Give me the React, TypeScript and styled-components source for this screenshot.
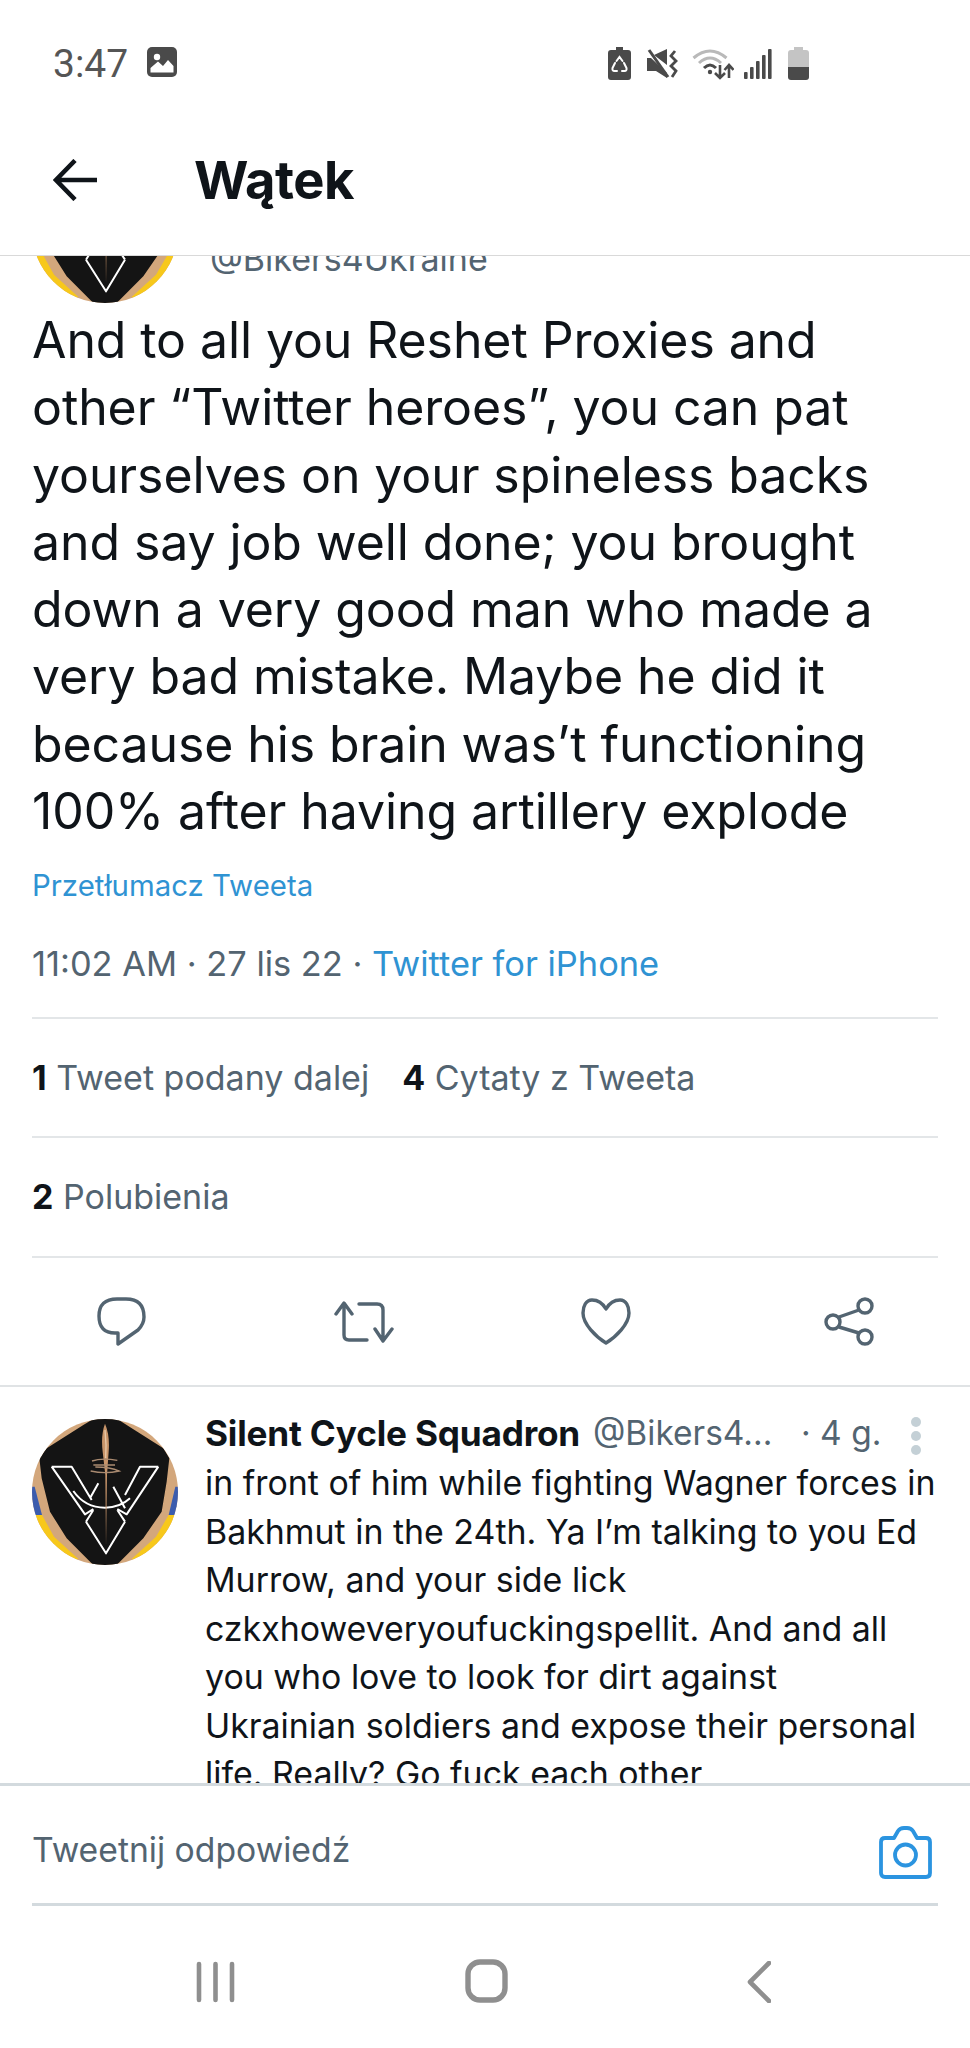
import React from "react";
import styled, { createGlobalStyle } from "styled-components";

const Global = createGlobalStyle`
  html, body { margin: 0; padding: 0; background: #fff; }
  * { box-sizing: border-box; }
`;

const Page = styled.div`
  width: 970px; height: 2048px; display: flex; flex-direction: column; overflow: hidden;
  background: #fff; font-family: Inter, "Noto Sans", sans-serif; color: #0f1419;
`;
const StatusBar = styled.div`
  height: 126px; flex: none; padding: 47px 0 0 53px; display: flex; align-items: flex-start;
  font-family: Roboto, sans-serif; color: #555;
`;
const Clock = styled.span`
  font-size: 39px; line-height: 34px; width: 94px; flex: none;
`;
const StatusIcons = styled.div`
  margin-left: 431px; display: flex; align-items: flex-start; gap: 0;
`;
const Header = styled.header`
  height: 130px; flex: none; display: flex; align-items: flex-start; border-bottom: 1px solid #d9d9d9;
  padding: 33px 0 0 53px; background: #fff;
`;
const Title = styled.h1`
  margin: -3px 0 0 97px; font-size: 52.5px; line-height: 48px; font-weight: 700; letter-spacing: -0.5px;
`;
const Scroll = styled.main`
  flex: 1; min-height: 0; overflow: hidden;
`;
const Author = styled.div`
  margin-top: -99px; padding-left: 32px; display: flex; gap: 32px; height: 146px;
`;
const AuthorNames = styled.div`
  display: flex; flex-direction: column; padding-top: 38px;
`;
const AuthorName = styled.span`
  font-size: 34px; line-height: 44px; font-weight: 700;
`;
const AuthorHandle = styled.span`
  font-size: 34px; line-height: 40px; color: #536471;
`;
const Body = styled.div`
  margin: 4px 0 0 32px; font-size: 50px; line-height: 67.3px; letter-spacing: -0.1px;
`;
const Line = styled.div`
  white-space: nowrap;
`;
const Translate = styled.div`
  margin: 21px 0 0 32px; font-size: 29.4px; line-height: 40px; color: #2f93d3;
`;
const Meta = styled.div`
  margin: 38px 0 0 32px; font-size: 34.4px; line-height: 40px; color: #536471; white-space: nowrap;
`;
const MetaLink = styled.span`
  color: #2f93d3;
`;
const Section = styled.div`
  margin: 33px 32px 0; border-top: 2px solid #e3e6e8; padding-top: 39px; height: 119px;
  display: flex; gap: 33px; font-size: 34px; line-height: 40px; color: #536471; white-space: nowrap;
`;
const Stat = styled.b`
  color: #0f1419; font-weight: 700;
`;
const Section2 = styled(Section)`
  margin-top: 0; height: 120px;
`;
const Actions = styled.div`
  margin: 0 32px; border-top: 2px solid #e3e6e8; height: 0;
`;
const ActionRow = styled.div`
  display: grid; grid-template-columns: repeat(4, 242.5px); height: 129px; border-bottom: 2px solid #e0e3e5;
  justify-items: center; align-items: center;
`;
const Reply = styled.article`
  display: flex; padding: 32px 0 0 32px; gap: 27px; position: relative;
`;
const ReplyBody = styled.div`
  flex: 1; min-width: 0; margin-top: -8px;
`;
const ReplyHead = styled.div`
  display: flex; height: 44px; align-items: center; font-size: 33.5px; white-space: nowrap;
`;
const ReplyName = styled.b`
  font-weight: 700; font-size: 35.2px; letter-spacing: -0.2px;
`;
const ReplyHandle = styled.span`
  color: #536471; margin-left: 13px; width: 208px; flex: none;
`;
const ReplyTime = styled.span`
  color: #536471;
`;
const Dots = styled.div`
  position: absolute; left: 911px; top: 30px; display: flex; flex-direction: column; gap: 4px;
`;
const Dot = styled.i`
  display: block; width: 10px; height: 10px; border-radius: 50%; background: #c4d0d6;
`;
const ReplyText = styled.div`
  font-size: 33.9px; line-height: 48.5px; margin-top: 4px;
`;
const Composer = styled.footer`
  flex: none; height: 120px; border-top: 3px solid #d3dade; margin: 0; display: flex; align-items: flex-start;
  justify-content: space-between; padding: 40px 38px 0 32px; background: #fff;
`;
const Placeholder = styled.span`
  font-size: 33.7px; line-height: 48px; color: #536471;
`;
const Rule = styled.div`
  flex: none; height: 3px; margin: 0 32px; background: #d3dade;
`;
const NavBar = styled.nav`
  flex: none; height: 142px; display: grid; grid-template-columns: 196px 269px 239px 1fr; align-items: flex-start; padding-top: 55px;
`;
const Spacer = styled.span``;

const Avatar = ({ size = 146 }: { size?: number }) => (
  <svg width={size} height={size} viewBox="6 12 438 438" style={{ flex: "none" }}>
    <defs>
      <clipPath id="avc"><circle cx="225" cy="231" r="219" /></clipPath>
    </defs>
    <g clipPath="url(#avc)">
      <rect x="6" y="12" width="438" height="438" fill="#d3a77c" />
      <polygon points="6,215 14,215 36,300 6,300" fill="#3b5cae" />
      <polygon points="6,300 36,300 72,365 145,432 100,450 6,450" fill="#f7c81b" />
      <polygon points="444,215 436,215 416,300 444,300" fill="#3b5cae" />
      <polygon points="444,300 416,300 378,365 305,432 350,450 444,450" fill="#f7c81b" />
      <polygon points="190,12 262,12 290,30 400,100 418,130 410,200 395,290 340,370 260,450 190,450 110,370 60,290 35,190 28,130 50,100 160,30" fill="#141414" />
      <path d="M65 155H125L185 255M65 155L165 298L190 282M385 155H330L285 240M385 155L290 298L262 282M168 320L228 415L285 320M168 320L190 285M285 320L262 285M130 228Q165 278 225 278Q270 278 300 250M205 205L180 250M250 215L285 280" fill="none" stroke="#fff" strokeWidth="6" strokeLinejoin="round" />
      <path d="M225 26Q240 60 236 110L231 180L228 395L226 180L218 110Q212 60 225 26Z" fill="#c8956a" />
      <path d="M225 45Q230 90 227 130" fill="none" stroke="#e9c9a8" strokeWidth="4" />
      <path d="M186 138Q215 128 262 136M182 168Q225 178 268 168Q240 156 196 156M190 150L255 150" fill="none" stroke="#a98a70" strokeWidth="4" />
    </g>
  </svg>
);

const ImageIcon = () => (
  <svg width="30" height="30" viewBox="0 0 30 30">
    <rect width="30" height="30" rx="5" fill="#4a4a4a" />
    <rect x="4" y="4" width="22" height="22" rx="1" fill="#4a4a4a" />
    <circle cx="10" cy="10" r="3.2" fill="#fff" />
    <path d="M3.5 25.5V21L11 14.5L16 19L21 13L26.5 19V25.5Z" fill="#fff" />
  </svg>
);
const RecycleBattery = () => (
  <svg width="23" height="33" viewBox="0 0 23 33" style={{ marginLeft: 0 }}>
    <path d="M8 0H15V3H20Q23 3 23 6V30Q23 33 20 33H3Q0 33 0 30V6Q0 3 3 3H8Z" fill="#4a4a4a" />
    <path d="M8.500 14L11.500 10L14.500 14M16 16L18.500 21Q19 24 16.500 24H14M9 24H6.500Q4 24 4.500 21L7 16" fill="none" stroke="#fff" strokeWidth="2" strokeLinecap="round" />
  </svg>
);
const MuteIcon = () => (
  <svg width="31" height="30" viewBox="0 0 31 30" style={{ marginLeft: 16, marginTop: 2 }}>
    <path d="M0 9H4L20 24V29L9 22H0Z M7 6L20 0V16Z" fill="#4a4a4a" />
    <path d="M2 1L21 28" stroke="#4a4a4a" strokeWidth="3" />
    <path d="M28 2L24 7L29 12L24 17L29 22L25 28" fill="none" stroke="#4a4a4a" strokeWidth="2.800" />
  </svg>
);
const WifiIcon = () => (
  <svg width="42" height="32" viewBox="0 0 42 32" style={{ marginLeft: 14, marginTop: 1 }}>
    <path d="M1.500 10Q18 -4 34.500 10" fill="none" stroke="#b9b9b9" strokeWidth="3" />
    <path d="M7 15Q18 5 29 15" fill="none" stroke="#b9b9b9" strokeWidth="3" />
    <path d="M12 20Q18 14 24 20" fill="none" stroke="#4a4a4a" strokeWidth="3" />
    <circle cx="18" cy="24" r="2.200" fill="#4a4a4a" />
    <path d="M28 17V30M23 25L28 30L33 25M37 30V17M32.500 22L37 17L41.500 22" fill="none" stroke="#4a4a4a" strokeWidth="2.600" />
  </svg>
);
const SignalIcon = () => (
  <svg width="28" height="31" viewBox="0 0 28 31" style={{ marginLeft: 10, marginTop: 2 }}>
    <rect x="0" y="23" width="3.600" height="7" rx="1" fill="#4a4a4a" />
    <rect x="6" y="18" width="3.600" height="12" rx="1" fill="#4a4a4a" />
    <rect x="12" y="12" width="3.600" height="18" rx="1" fill="#4a4a4a" />
    <rect x="18" y="6" width="3.600" height="24" rx="1" fill="#4a4a4a" />
    <rect x="24" y="0" width="3.600" height="30" rx="1" fill="#4a4a4a" />
  </svg>
);
const BatteryIcon = () => (
  <svg width="21" height="33" viewBox="0 0 21 33" style={{ marginLeft: 16 }}>
    <path d="M6 0H15V3H18Q21 3 21 6V20H0V6Q0 3 3 3H6Z" fill="#c4c4c4" />
    <path d="M0 20H21V30Q21 33 18 33H3Q0 33 0 30Z" fill="#4a4a4a" />
  </svg>
);
const BackArrow = () => (
  <svg width="44" height="42" viewBox="0 0 44 42" style={{ flex: "none" }}>
    <path d="M44 21H3M22 1.500L3 21L22 40.500" fill="none" stroke="#0f1419" strokeWidth="4.600" />
  </svg>
);
const ic = { fill: "none", stroke: "#536471", strokeWidth: 3.4 } as const;
const ReplyIcon = () => (
  <svg width="49" height="49" viewBox="0 0 49 49">
    <path d="M20 2H29Q47 2 47 20Q47 27 41 33L21 47V36H18Q2 36 2 19Q2 2 20 2Z" {...ic} strokeLinejoin="round" />
  </svg>
);
const RetweetIcon = () => (
  <svg width="60" height="42" viewBox="0 0 60 42">
    <path d="M2 13L10 2L18 13M10 3V34Q10 39 15 39H33M25 3H43Q49 3 49 9V39M41 28L49 40L58 28" {...ic} strokeLinejoin="round" strokeLinecap="round" />
  </svg>
);
const HeartIcon = () => (
  <svg width="50" height="47" viewBox="0 0 50 47">
    <path d="M25 11C21 4 16 2 11 2C5 2 2 8 2 15C2 26 15 39 25 45C35 39 48 26 48 15C48 8 45 2 39 2C34 2 29 4 25 11Z" {...ic} strokeLinejoin="round" />
  </svg>
);
const ShareIcon = () => (
  <svg width="50" height="49" viewBox="0 0 50 49">
    <circle cx="41" cy="9" r="7" {...ic} />
    <circle cx="9" cy="25" r="7" {...ic} />
    <circle cx="41" cy="40" r="7" {...ic} />
    <path d="M15 20L35 13M15 30L35 36" {...ic} />
  </svg>
);
const CameraIcon = () => (
  <svg width="53" height="53" viewBox="0 0 53 53" style={{ flex: "none" }}>
    <path d="M15 12L19 5Q21 2 25 2H28Q32 2 34 5L38 12H47Q51 12 51 16V47Q51 51 47 51H6Q2 51 2 47V16Q2 12 6 12Z" fill="none" stroke="#2b94e0" strokeWidth="3.800" strokeLinejoin="round" />
    <circle cx="26.500" cy="29" r="10.500" fill="none" stroke="#2b94e0" strokeWidth="3.800" />
  </svg>
);
const navS = { fill: "none", stroke: "#8f8f8f", strokeLinecap: "round" } as const;
const NavBars = () => (
  <svg width="39" height="42" viewBox="0 0 39 42">
    <path d="M3 3V39M19.500 3V39M36 3V39" {...navS} strokeWidth="4.600" />
  </svg>
);
const NavHome = () => (
  <svg width="43" height="44" viewBox="0 0 43 44" style={{ marginTop: -2 }}>
    <rect x="3" y="3" width="37" height="38" rx="12" {...navS} strokeWidth="5.400" />
  </svg>
);
const NavBack = () => (
  <svg width="24" height="42" viewBox="0 0 24 42" style={{ marginLeft: 43 }}>
    <path d="M22 2L3 21L22 40" {...navS} strokeWidth="4.600" strokeLinejoin="round" />
  </svg>
);

const body = [
  "And to all you Reshet Proxies and",
  "other “Twitter heroes”, you can pat",
  "yourselves on your spineless backs",
  "and say job well done; you brought",
  "down a very good man who made a",
  "very bad mistake. Maybe he did it",
  "because his brain was’t functioning",
  "100% after having artillery explode",
];
const reply = [
  "in front of him while fighting Wagner forces in",
  "Bakhmut in the 24th. Ya I’m talking to you Ed",
  "Murrow, and your side lick",
  "czkxhoweveryoufuckingspellit. And and all",
  "you who love to look for dirt against",
  "Ukrainian soldiers and expose their personal",
  "life. Really? Go fuck each other",
];

export default function App() {
  return (
    <Page>
      <Global />
      <StatusBar>
        <Clock>3:47</Clock>
        <ImageIcon />
        <StatusIcons>
          <RecycleBattery />
          <MuteIcon />
          <WifiIcon />
          <SignalIcon />
          <BatteryIcon />
        </StatusIcons>
      </StatusBar>
      <Header>
        <BackArrow />
        <Title>Wątek</Title>
      </Header>
      <Scroll>
        <Author>
          <Avatar />
          <AuthorNames>
            <AuthorName>Silent Cycle Squadron</AuthorName>
            <AuthorHandle>@Bikers4Ukraine</AuthorHandle>
          </AuthorNames>
        </Author>
        <Body>
          {body.map((l) => (
            <Line key={l}>{l}</Line>
          ))}
        </Body>
        <Translate>Przetłumacz Tweeta</Translate>
        <Meta>
          11:02 AM · 27 lis 22 · <MetaLink>Twitter for iPhone</MetaLink>
        </Meta>
        <Section>
          <span><Stat>1</Stat> Tweet podany dalej</span>
          <span><Stat>4</Stat> Cytaty z Tweeta</span>
        </Section>
        <Section2>
          <span><Stat>2</Stat> Polubienia</span>
        </Section2>
        <Actions />
        <ActionRow>
          <ReplyIcon />
          <RetweetIcon />
          <HeartIcon />
          <ShareIcon />
        </ActionRow>
        <Reply>
          <Avatar />
          <ReplyBody>
            <ReplyHead>
              <ReplyName>Silent Cycle Squadron</ReplyName>
              <ReplyHandle>@Bikers4...</ReplyHandle>
              <ReplyTime>· 4 g.</ReplyTime>
            </ReplyHead>
            <ReplyText>
              {reply.map((l) => (
                <Line key={l}>{l}</Line>
              ))}
            </ReplyText>
          </ReplyBody>
          <Dots><Dot /><Dot /><Dot /></Dots>
        </Reply>
      </Scroll>
      <Composer>
        <Placeholder>Tweetnij odpowiedź</Placeholder>
        <CameraIcon />
      </Composer>
      <Rule />
      <NavBar>
        <Spacer />
        <NavBars />
        <NavHome />
        <NavBack />
      </NavBar>
    </Page>
  );
}
